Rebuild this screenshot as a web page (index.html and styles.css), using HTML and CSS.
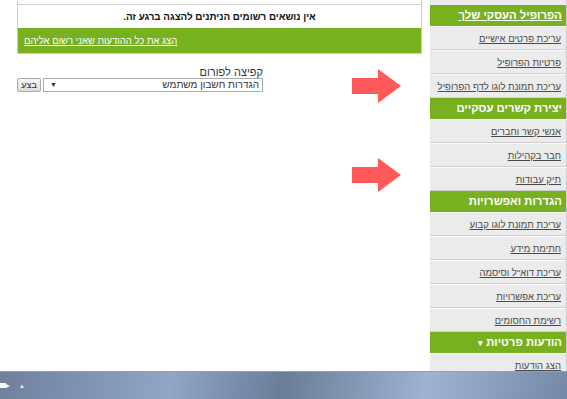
FILE: index.html
```html
<!DOCTYPE html>
<html lang="he" dir="rtl">
<head>
    <meta charset="UTF-8">
    <title>הפרופיל העסקי שלך</title>
    <link rel="stylesheet" href="styles.css">
</head>
<body>
    <div class="app">
        <div class="sidebar">
            <div class="side-top"></div>
            <div class="side-head"><a href="#">הפרופיל העסקי שלך</a></div>
            <div class="side-item"><a href="#">עריכת פרטים אישיים</a></div>
            <div class="side-item"><a href="#">פרטיות הפרופיל</a></div>
            <div class="side-item"><a href="#">עריכת תמונת לוגו לדף הפרופיל</a></div>

            <div class="side-head">יצירת קשרים עסקיים</div>
            <div class="side-item"><a href="#">אנשי קשר וחברים</a></div>
            <div class="side-item"><a href="#">חבר בקהילות</a></div>
            <div class="side-item"><a href="#">תיק עבודות</a></div>

            <div class="side-head">הגדרות ואפשרויות</div>
            <div class="side-item"><a href="#">עריכת תמונת לוגו קבוע</a></div>
            <div class="side-item"><a href="#">חתימת מידע</a></div>
            <div class="side-item"><a href="#">עריכת דוא"ל וסיסמה</a></div>
            <div class="side-item"><a href="#">עריכת אפשרויות</a></div>
            <div class="side-item"><a href="#">רשימת החסומים</a></div>

            <div class="side-head">הודעות פרטיות <span class="caret">&#9662;</span></div>
            <div class="side-item"><a href="#">הצג הודעות</a></div>
        </div>

        <div class="main">
            <div class="topics">
                <div class="topics-top"></div>
                <div class="topics-empty">אין נושאים רשומים הניתנים להצגה ברגע זה.</div>
                <div class="topics-foot"><a href="#">הצג את כל ההודעות שאני רשום אליהם</a></div>
            </div>

            <div class="jump">
                <div class="jump-label">קפיצה לפורום</div>
                <div class="jump-row">
                    <div class="jump-select">
                        <span>הגדרות חשבון משתמש</span>
                        <span class="arrow">&#9660;</span>
                    </div>
                    <button class="jump-btn">בצע</button>
                </div>
            </div>

            <!-- arrows pointing at the sidebar -->
            <svg class="pointer p1" width="50" height="36" viewBox="0 0 50 36">
                <polygon points="0,9 26,9 26,0 49,17 26,34 26,25 0,25" fill="#ff5959"/>
            </svg>
            <svg class="pointer p2" width="50" height="36" viewBox="0 0 50 36">
                <polygon points="0,9 26,9 26,0 49,17 26,34 26,25 0,25" fill="#ff5959"/>
            </svg>
        </div>
    </div>

    <div class="taskbar">
        <div class="tray">
            <svg width="10" height="8" viewBox="0 0 10 8">
                <rect x="0" y="1" width="6" height="5" fill="#f4f6fa"/>
                <polygon points="6,2 10,4 6,6" fill="#f4f6fa"/>
            </svg>
            <span class="up">&#9650;</span>
        </div>
    </div>
</body>
</html>
```

FILE: styles.css
```css
* {
    margin: 0;
    padding: 0;
    box-sizing: border-box;
}

body {
    font-family: "Liberation Sans", Arial, sans-serif;
    font-size: 11px;
    color: #333;
    background: #fff;
    width: 567px;
    height: 399px;
    overflow: hidden;
}

.app {
    display: flex;
    height: 371px;
}

.sidebar {
    width: 137px;
    background-color: #ebebeb;
    border-right: 1px solid #cfcfcf;
    overflow: hidden;
}

.side-top {
    height: 5px;
}

.side-head {
    background-color: #77b11f;
    color: #fff;
    font-size: 11.3px;
    font-weight: bold;
    height: 21px;
    line-height: 21px;
    padding-right: 4px;
    white-space: nowrap;
}

.side-head a {
    color: #fff;
}

.caret {
    font-size: 9px;
}

.side-item {
    height: 24px;
    line-height: 23px;
    padding-right: 5px;
    border-bottom: 1px solid #d0d0d0;
    border-top: 1px solid #fafafa;
    white-space: nowrap;
    font-size: 9.5px;
}

.side-item:last-child {
    border-bottom: none;
}

.side-item a {
    color: #4a4a4a;
}

.main {
    flex-grow: 1;
    position: relative;
    padding: 0 8px 0 0;
}

.topics {
    margin-left: 17px;
    border: 1px solid #cfcfcf;
    border-top: none;
}

.topics-top {
    height: 5px;
    border-bottom: 1px solid #cfcfcf;
}

.topics-empty {
    height: 23px;
    line-height: 24px;
    text-align: center;
    font-weight: bold;
    font-size: 9.8px;
    color: #111;
}

.topics-foot {
    background-color: #77b11f;
    height: 25px;
    line-height: 26px;
    text-align: left;
    padding-left: 6px;
    font-size: 9.5px;
}

.topics-foot a {
    color: #fff;
}

.jump {
    width: 246px;
    margin-right: auto;
    margin-left: 17px;
    margin-top: 12px;
}

.jump-label {
    font-size: 11px;
    color: #333;
    height: 12px;
    line-height: 12px;
}

.jump-row {
    display: flex;
    gap: 2px;
}

.jump-select {
    flex-grow: 1;
    display: flex;
    justify-content: space-between;
    height: 14px;
    line-height: 12px;
    border: 1px solid #a9a9a9;
    padding: 0 3px;
    font-size: 10px;
    background: #fff;
}

.arrow {
    font-size: 7px;
    padding-left: 3px;
}

.jump-btn {
    width: 24px;
    height: 14px;
    font-family: inherit;
    font-size: 9px;
    line-height: 11px;
    border: 1px solid #a9a9a9;
    background: linear-gradient(#f5f5f5, #dedede);
    border-radius: 2px;
    color: #333;
}

.pointer {
    position: absolute;
    display: block;
}

.p1 {
    left: 352px;
    top: 69px;
}

.p2 {
    left: 352px;
    top: 158px;
}

.taskbar {
    height: 28px;
    border-top: 1px solid #9a9ea6;
    background: linear-gradient(100deg, #6f809c 0%, #8fa6c6 30%, #6a7c98 50%, #9db3d0 75%, #7489a8 100%);
    direction: ltr;
}

.tray {
    display: flex;
    align-items: center;
    gap: 9px;
    height: 27px;
}

.up {
    color: #e8edf5;
    font-size: 6px;
}
```
